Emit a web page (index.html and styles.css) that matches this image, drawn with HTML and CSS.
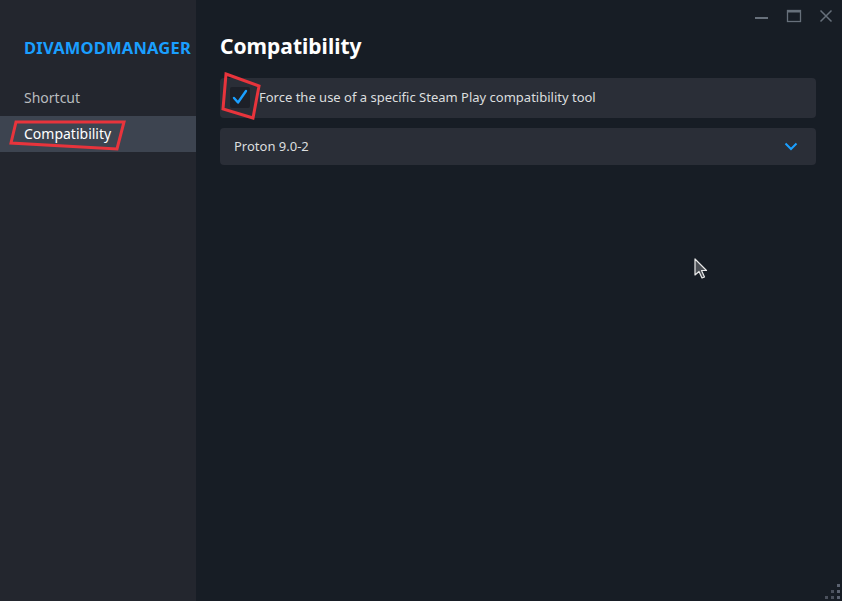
FILE: index.html
```html
<!DOCTYPE html>
<html>
<head>
<meta charset="utf-8">
<link rel="stylesheet" href="styles.css">
</head>
<body>
<div class="app">
  <aside class="sidebar">
    <div class="app-title">DIVAMODMANAGER</div>
    <nav class="nav">
      <div class="nav-item">Shortcut</div>
      <div class="nav-item active">Compatibility
        <svg class="mark mark-nav" width="120" height="36" viewBox="0 0 120 36"><polygon points="7,6 115,6 108,33 2,27" fill="none" stroke="#e8343c" stroke-width="3" stroke-linejoin="miter"/></svg>
      </div>
    </nav>
  </aside>
  <main class="main">
    <div class="titlebar">
      <svg class="ctl" width="16" height="16" viewBox="0 0 16 16"><rect x="1" y="9" width="13" height="2" fill="#67707b"/></svg>
      <svg class="ctl" width="16" height="16" viewBox="0 0 16 16"><rect x="1.5" y="2.5" width="13" height="11" fill="none" stroke="#67707b" stroke-width="1.3"/><rect x="1.5" y="2.5" width="13" height="2" fill="#67707b"/></svg>
      <svg class="ctl" width="16" height="16" viewBox="0 0 16 16"><path d="M2.5 2.5 L13.5 13.5 M13.5 2.5 L2.5 13.5" stroke="#67707b" stroke-width="1.5"/></svg>
    </div>
    <h1 class="heading">Compatibility</h1>
    <div class="panel check-row">
      <span class="checkbox">
        <svg width="20" height="20" viewBox="0 0 20 20"><path d="M4 11 L8 15.5 L16 4" fill="none" stroke="#1a9fff" stroke-width="2.4" stroke-linecap="round" stroke-linejoin="round"/></svg>
        <svg class="mark mark-check" width="40" height="50" viewBox="0 0 40 50"><polygon points="5,3 38,15 32,47 2,38" fill="none" stroke="#e8343c" stroke-width="3"/></svg>
      </span>
      <span class="check-label">Force the use of a specific Steam Play compatibility tool</span>
    </div>
    <div class="panel select-row">
      <span class="select-label">Proton 9.0-2</span>
      <svg width="14" height="10" viewBox="0 0 14 10"><path d="M1.5 2.5 L7 8 L12.5 2.5" fill="none" stroke="#1a9fff" stroke-width="2"/></svg>
    </div>
    <svg class="cursor" width="14" height="22" viewBox="0 0 14 22"><path d="M1 1 L1 17 L5 13.5 L8 20 L10.5 19 L7.5 12.5 L12.5 12.5 Z" fill="#4b4f55" stroke="#e8e8e8" stroke-width="1.2" stroke-linejoin="round"/></svg>
    <svg class="grip" width="18" height="18" viewBox="0 0 18 18">
      <rect x="13" y="1" width="3" height="3" fill="#5b6270"/>
      <rect x="7" y="7" width="3" height="3" fill="#4a505c"/><rect x="13" y="7" width="3" height="3" fill="#5b6270"/>
      <rect x="1" y="13" width="3" height="3" fill="#4a505c"/><rect x="7" y="13" width="3" height="3" fill="#4a505c"/><rect x="13" y="13" width="3" height="3" fill="#5b6270"/>
    </svg>
  </main>
</div>
</body>
</html>
```

FILE: styles.css
```css
* { box-sizing: border-box; }
html, body { margin: 0; padding: 0; }
body {
  width: 842px;
  height: 601px;
  overflow: hidden;
  background: #171d25;
  font-family: "Noto Sans", "Open Sans", sans-serif;
  color: #dcdedf;
}
.app {
  display: flex;
  height: 601px;
}
.sidebar {
  width: 196px;
  flex-shrink: 0;
  background: #23262e;
  padding-top: 37px;
}
.app-title {
  color: #1a9fff;
  font-weight: 700;
  font-size: 16.5px;
  letter-spacing: 0.2px;
  padding-left: 24px;
  line-height: 22px;
  white-space: nowrap;
}
.nav {
  margin-top: 21px;
  display: flex;
  flex-direction: column;
}
.nav-item {
  position: relative;
  height: 36px;
  line-height: 36px;
  padding-left: 24px;
  font-size: 14px;
  color: #b8bcbf;
}
.nav-item.active {
  background: #3d4450;
  color: #ffffff;
}
.mark {
  position: absolute;
  pointer-events: none;
}
.mark-nav {
  left: 9px;
  top: 0;
}
.main {
  position: relative;
  flex: 1;
  padding: 0 26px 0 24px;
}
.titlebar {
  height: 31px;
  display: flex;
  justify-content: flex-end;
  align-items: center;
  gap: 16px;
  margin-right: -18px;
  padding-top: 0;
}
.ctl { display: block; }
.heading {
  margin: 0;
  font-size: 21px;
  font-weight: 700;
  color: #ffffff;
  line-height: 30px;
}
.panel {
  background: #2a2e37;
  border-radius: 4px;
  display: flex;
  align-items: center;
}
.check-row {
  margin-top: 17px;
  height: 40px;
  padding-left: 10px;
  padding-bottom: 2px;
  gap: 9px;
}
.checkbox {
  position: relative;
  width: 20px;
  height: 21px;
  background: #1d2028;
  border-radius: 2px;
  display: flex;
  align-items: center;
  justify-content: center;
}
.mark-check {
  left: -9px;
  top: -16px;
}
.check-label {
  font-size: 13px;
  color: #dcdedf;
}
.select-row {
  margin-top: 10px;
  height: 37px;
  padding: 0 18px 2px 14px;
  justify-content: space-between;
}
.select-label {
  font-size: 13px;
  color: #dcdedf;
}
.cursor {
  position: absolute;
  left: 498px;
  top: 258px;
}
.grip {
  position: absolute;
  right: 0;
  bottom: 0;
}
```
